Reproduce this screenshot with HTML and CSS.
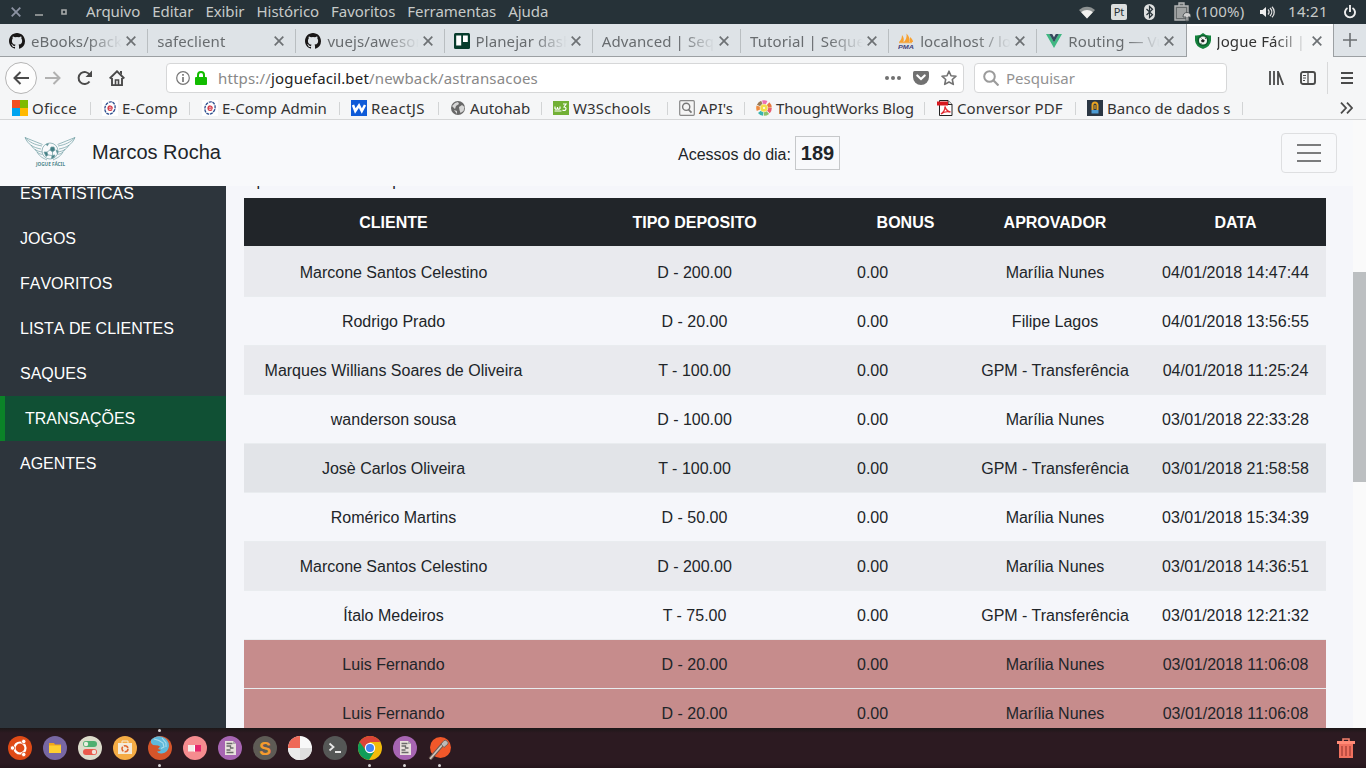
FILE: index.html
```html
<!DOCTYPE html>
<html lang="pt-BR">
<head>
<meta charset="utf-8">
<title>Jogue Fácil</title>
<link rel="stylesheet" href="styles.css">
</head>
<body>
<svg class="defs" width="0" height="0">
  <symbol id="x" viewBox="0 0 10 10"><path d="M.7.7l8.600 8.600M9.300.7L.7 9.300" fill="none" stroke="currentColor" stroke-width="1.700"/></symbol>
  <symbol id="github" viewBox="0 0 16 16"><path fill="#191717" d="M8 0C3.580 0 0 3.580 0 8c0 3.540 2.290 6.530 5.470 7.590.4.070.55-.17.55-.38V13.820c-2.010.37-2.530-.49-2.690-.94-.09-.23-.48-.94-.82-1.130-.28-.15-.68-.52-.01-.53.63-.01 1.080.58 1.230.82.72 1.210 1.870.87 2.330.66.070-.52.28-.87.51-1.070-1.780-.2-3.640-.89-3.640-3.950 0-.87.31-1.590.82-2.150-.08-.2-.36-1.020.080-2.120 0 0 .67-.21 2.200.82a7.600 7.600 0 0 1 4 0c1.530-1.040 2.200-.82 2.200-.82.44 1.100.16 1.920.080 2.120.51.56.82 1.270.82 2.150 0 3.070-1.870 3.750-3.650 3.950.29.25.54.73.54 1.480v2.200c0 .21.15.46.55.38A8 8 0 0 0 16 8c0-4.420-3.580-8-8-8z"/></symbol>
  <symbol id="ecomp" viewBox="0 0 16 16"><rect width="16" height="16" fill="#fff"/><ellipse cx="8" cy="8" rx="5" ry="6.300" fill="none" stroke="#2c4d8e" stroke-width="1.300" stroke-dasharray="3 .8" transform="rotate(18 8 8)"/><path d="M6 8.200h4.200c.2-2.800-4.200-3-4.200 0 0 2.800 3.300 2.500 4 1.200" fill="none" stroke="#d43a48" stroke-width="1.300"/></symbol>
  <symbol id="doc" viewBox="0 0 24 24"><circle cx="12" cy="12" r="12" fill="#a765b2"/><path d="M7 5h8l3 3v11H7z" fill="#e8e2dd"/><path d="M8.500 7.500h6M8.500 10h4v2h3M8.500 14h4M8.500 16.500h7" fill="none" stroke="#6a6a6a" stroke-width="1.300"/><path d="M15 5v3h3" fill="#aaa"/></symbol>
</svg>

<header class="panel">
  <div class="winbtns">
    <svg width="10" height="10"><path d="M.7.7l8.600 8.600M9.300.7L.7 9.300" stroke="#8c93a3" stroke-width="1.800"/></svg>
    <svg width="8" height="10"><path d="M0 8h8" stroke="#a8abaa" stroke-width="1.500"/></svg>
    <svg width="6" height="10"><path d="M1 3h4v4H1z" fill="none" stroke="#a8abaa" stroke-width="1.600"/></svg>
  </div>
  <nav class="menu"><span>Arquivo</span><span>Editar</span><span>Exibir</span><span>Histórico</span><span>Favoritos</span><span>Ferramentas</span><span>Ajuda</span></nav>
  <div class="tray">
    <svg class="wifi" width="16" height="13"><path d="M0 4C4.500-.5 11.500-.5 16 4L8 12.500z" fill="#8d9292"/><path d="M2.200 6.300c3.300-3 8.300-3 11.600 0L8 12.500z" fill="#f2f2f0"/></svg>
    <span class="lang">Pt</span>
    <svg class="bt" width="11" height="16"><rect width="11" height="16" rx="5.500" fill="#dfe1e1"/><path d="M2.500 5l6 5.700L5.500 13.500v-11l3 2.800-6 5.700" fill="none" stroke="#263238" stroke-width="1.200"/></svg>
    <svg class="bat" width="17" height="20"><path d="M5 1h5v3H5zM1 4h13v14H1z" fill="#666b6c" stroke="#b4b6b6" stroke-width="1.400"/><path d="M3 6h9v10H3z" fill="#9fa2a2"/><path d="M9 15c0-3 1.500-4.500 4-4.500s4 1.500 4 4.500h-3v4h-2v-4z" fill="#cfcfcf" stroke="#4b5052" stroke-width=".9"/></svg>
    <span class="pct">(100%)</span>
    <svg class="vol" width="15" height="12"><path d="M0 4h2.500L6 1v10L2.500 8H0z" fill="#eee"/><path d="M8 3.500c1.300 1.500 1.300 3.500 0 5M10 2c2.300 2.300 2.300 5.700 0 8M12 .7c3 3 3 7.600 0 10.600" fill="none" stroke="#ddd" stroke-width="1.300"/></svg>
    <span class="clock">14:21</span>
    <svg class="power" width="12" height="14"><path d="M3.500 3a5 5 0 1 0 5 0M6 0v7" fill="none" stroke="#eee" stroke-width="1.900"/></svg>
  </div>
</header>

<div class="tabs">
  <div class="tab"><svg class="fav"><use href="#github"/></svg><span class="title">eBooks/packt</span><svg class="close"><use href="#x"/></svg></div>
  <div class="tab"><span class="title">safeclient</span><svg class="close"><use href="#x"/></svg></div>
  <div class="tab"><svg class="fav"><use href="#github"/></svg><span class="title">vuejs/awesome</span><svg class="close"><use href="#x"/></svg></div>
  <div class="tab"><svg class="fav" viewBox="0 0 16 16"><rect width="16" height="16" rx="1.500" fill="#073c2c"/><path d="M2.200 2.500h5v10h-5zM9 2.500h4.800v6.500H9z" fill="#fff"/></svg><span class="title">Planejar dashb</span><svg class="close"><use href="#x"/></svg></div>
  <div class="tab"><span class="title">Advanced | Sequelize</span><svg class="close"><use href="#x"/></svg></div>
  <div class="tab"><span class="title">Tutorial | Sequelize</span><svg class="close"><use href="#x"/></svg></div>
  <div class="tab"><svg class="fav" viewBox="0 0 16 16"><path d="M1 9c2-2 3-4 3-7 2 2 2 5 1.500 7zM6 9c2-2 3-5 2.500-8.500 3 3 3.500 6 3 8.500zM12 9V4c2 2 3 3 3 5z" fill="#f7a131"/><path d="M1 9.700h13" stroke="#f7a131"/><text x="0" y="15.500" class="pma" textLength="16" lengthAdjust="spacingAndGlyphs">PMA</text></svg><span class="title">localhost / loc</span><svg class="close"><use href="#x"/></svg></div>
  <div class="tab last"><svg class="fav" viewBox="0 0 16 16"><path d="M0 1h3.300L8 9l4.700-8H16L8 15z" fill="#41b883"/><path d="M3.200 1h3L8 4.200 9.800 1h3L8 9.300z" fill="#35495e"/></svg><span class="title">Routing — Vue</span><svg class="close"><use href="#x"/></svg></div>
  <div class="tab active"><svg class="fav" viewBox="0 0 16 16"><path d="M0 2.500q5 .5 8-2.500 3 3 8 2.500v5q-.5 6-8 8.500-7.500-2.500-8-8.500z" fill="#15823d"/><circle cx="8" cy="7.500" r="5.600" fill="#0c5a2c"/><circle cx="8" cy="7.500" r="4" fill="#f2f4f2"/><path d="M7.700 6l2 1.200-.7 2H6.700L6 7.500z" fill="#222"/><path d="M5.500 4.500l1 .8M10.300 4.500l.7 1.500M5.500 10l.8.8" stroke="#222"/></svg><span class="title">Jogue Fácil | Área</span><svg class="close"><use href="#x"/></svg></div>
  <div class="newtab"><svg width="14" height="14"><path d="M7 0v14M0 7h14" stroke="#6b6f72" stroke-width="1.600"/></svg></div>
</div>

<div class="toolbar">
  <div class="back"><svg width="16" height="14"><path d="M7.500 1L1.500 7l6 6M1.500 7H16" fill="none" stroke="#4a4a4a" stroke-width="2"/></svg></div>
  <svg class="fwd" width="16" height="14"><path d="M8.500 1l6 6-6 6M14.500 7H0" fill="none" stroke="#b1b1b1" stroke-width="2"/></svg>
  <svg class="reload" width="16" height="16"><path d="M12.500 11.500A6 6 0 1 1 12.800 5" fill="none" stroke="#4a4a4a" stroke-width="2"/><path d="M15 .5V7H8.500z" fill="#4a4a4a"/></svg>
  <svg class="home" width="16" height="16"><path d="M.7 8.500L8 1.300l7.300 7.200M3 8v7.200h10V8" fill="none" stroke="#4a4a4a" stroke-width="1.900"/><path d="M6.500 15v-5h3v5" fill="none" stroke="#4a4a4a" stroke-width="1.600"/><path d="M11 1h2v4l-2-2z" fill="#4a4a4a"/></svg>
  <div class="url">
    <svg class="info" width="14" height="14"><circle cx="7" cy="7" r="6.300" fill="none" stroke="#777" stroke-width="1.200"/><path d="M7 6v5M7 3v1.700" stroke="#777" stroke-width="1.700"/></svg>
    <svg class="lock" width="12" height="14"><path d="M3 7V4a3 3 0 0 1 6 0v3" fill="none" stroke="#12bc00" stroke-width="2"/><rect y="6" width="12" height="8" rx="1" fill="#12bc00"/></svg>
    <span class="addr"><span>https://</span><b>joguefacil.bet</b><span>/newback/astransacoes</span></span>
    <svg class="dots" width="16" height="4"><g fill="#717171"><circle cx="2" cy="2" r="2"/><circle cx="8" cy="2" r="2"/><circle cx="14" cy="2" r="2"/></g></svg>
    <svg class="pocket" width="16" height="14"><path d="M1.500 0h13Q16 0 16 1.500V6a8 8 0 0 1-16 0V1.500Q0 0 1.500 0z" fill="#717171"/><path d="M4.300 4.500L8 8l3.700-3.500" fill="none" stroke="#fff" stroke-width="2.200" stroke-linecap="round"/></svg>
    <svg class="star" width="16" height="16"><path d="M8 1.200l2 4.500 5 .5-3.700 3.300 1 4.900L8 12l-4.300 2.400 1-4.900L1 6.200l5-.5z" fill="none" stroke="#717171" stroke-width="1.600" stroke-linejoin="round"/></svg>
  </div>
  <div class="search"><svg width="16" height="16"><circle cx="6.500" cy="6.500" r="5.300" fill="none" stroke="#9b9b9b" stroke-width="2"/><path d="M10.300 10.300L15.500 15.500" stroke="#9b9b9b" stroke-width="2.200"/></svg><span>Pesquisar</span></div>
  <svg class="lib" width="15" height="14"><path d="M1 0v14M5 0v14M9 0v14M9.500 1.500L14.200 14" stroke="#4a4a4a" stroke-width="1.800" fill="none"/></svg>
  <svg class="side" width="16" height="14"><rect x="1" y="1" width="14" height="12" rx="2" fill="none" stroke="#4a4a4a" stroke-width="1.900"/><path d="M8 1v12" stroke="#4a4a4a" stroke-width="1.300"/><path d="M3 4.500h3M3 7h3M3 9.500h2" stroke="#4a4a4a"/></svg>
  <div class="burger"><svg width="12" height="12"><path d="M0 1h12M0 6h12M0 11h12" stroke="#4a4a4a" stroke-width="2"/></svg></div>
</div>

<div class="bookmarks">
  <div class="bm w1"><svg viewBox="0 0 16 16"><path d="M0 0h8v8H0z" fill="#f25022"/><path d="M8 0h8v8H8z" fill="#7fba00"/><path d="M0 8h8v8H0z" fill="#00a4ef"/><path d="M8 8h8v8H8z" fill="#ffb900"/></svg><span>Oficce</span></div>
  <div class="bm w2"><svg><use href="#ecomp"/></svg><span>E-Comp</span></div>
  <div class="bm w3"><svg><use href="#ecomp"/></svg><span>E-Comp Admin</span></div>
  <div class="bm w4"><svg viewBox="0 0 16 16"><rect width="16" height="16" fill="#0f5bd8"/><path d="M2 5l2.300 6L8 5.500l2.800 5.500L14 5" fill="none" stroke="#fff" stroke-width="2.500"/></svg><span>ReactJS</span></div>
  <div class="bm w5"><svg viewBox="0 0 16 16"><circle cx="8" cy="8" r="7" fill="#686868"/><path d="M2 6l3-3 3-1 1 2-3 2-1 3zM9 7l3-2 2.500 2-1 4-3 2-1-3zM4 10l3 1v3z" fill="#d7d7d7"/></svg><span>Autohab</span></div>
  <div class="bm w6"><svg viewBox="0 0 16 16"><rect y="1" width="16" height="14" fill="#72b035"/><path d="M2 6.500v2q1.500 1.500 2.500 0V7v1.500q1.500 1.500 2.500 0v-2M1.500 11h7M10 4h3l-2 3q3 .5 1.500 3-1.500 1-3 0" fill="none" stroke="#fff" stroke-width="1.200"/></svg><span>W3Schools</span></div>
  <div class="bm w7"><svg viewBox="0 0 16 16"><rect x=".7" y=".7" width="14.600" height="14.600" rx="1" fill="#f5f5f5" stroke="#888" stroke-width="1.200"/><circle cx="7.200" cy="6.800" r="3.600" fill="none" stroke="#777" stroke-width="1.400"/><path d="M9.500 9.500l3 3.200" stroke="#777" stroke-width="1.800"/></svg><span>API's</span></div>
  <div class="bm w8"><svg viewBox="0 0 16 16"><g fill="none" stroke-width="3.600"><circle cx="8" cy="8" r="6" stroke="#e95c6c" stroke-dasharray="4.300 34"/><circle cx="8" cy="8" r="6" stroke="#8bc269" stroke-dasharray="4.300 34" stroke-dashoffset="-5"/><circle cx="8" cy="8" r="6" stroke="#3bb5b0" stroke-dasharray="4.300 34" stroke-dashoffset="-10"/><circle cx="8" cy="8" r="6" stroke="#f08b3e" stroke-dasharray="4.300 34" stroke-dashoffset="-16"/><circle cx="8" cy="8" r="6" stroke="#9a7b58" stroke-dasharray="4.300 34" stroke-dashoffset="-21"/><circle cx="8" cy="8" r="6" stroke="#ee6fb0" stroke-dasharray="4.300 34" stroke-dashoffset="-26"/><circle cx="8" cy="8" r="6" stroke="#e9793e" stroke-dasharray="4.300 34" stroke-dashoffset="-32"/></g><circle cx="8" cy="8" r="3.700" fill="#f5dc4a"/><circle cx="8" cy="8" r="1" fill="#fff"/></svg><span>ThoughtWorks Blog</span></div>
  <div class="bm w9"><svg viewBox="0 0 16 16"><path d="M2.500.5h8.500l4 4v11H2.500z" fill="#fff" stroke="#222"/><path d="M11 .5v4h4" fill="#ddd" stroke="#222"/><path d="M0 1.500h11v4H0z" fill="#d71920"/><path d="M4 14c3-2 4-5 4-7.500 1 4 3 5 5.500 5.500-4-1-7 0-9.500 2z" fill="none" stroke="#e32b32" stroke-width="1.300"/></svg><span>Conversor PDF</span></div>
  <div class="bm w10"><svg viewBox="0 0 16 16"><rect width="16" height="16" fill="#2b3744"/><path d="M5.500 10V5a2.500 2.500 0 0 1 5 0v5" fill="none" stroke="#e9a421" stroke-width="2"/><path d="M8 5v4" stroke="#e9a421" stroke-width="1.200"/><path d="M4.500 10h7v3.500h-7z" fill="#4c9bd3"/></svg><span>Banco de dados s</span></div>
  <svg class="more" width="13" height="12"><path d="M1 .7L6 6l-5 5.300M7 .7L12 6l-5 5.300" fill="none" stroke="#4a4a4a" stroke-width="1.800"/></svg>
</div>

<div class="page">
  <div class="view">
    <header class="topbar">
      <svg class="logo" width="52" height="32" viewBox="0 0 52 32" fill="none" stroke="#6f9ea2" stroke-width=".7">
        <path d="M1 1.500l17.500 7M1 1.500c3 7 8 10 16 11.500M1 1.500c5 5 9 7 17 8.500M7 9c3 5 6 6 11 7M11 13c2 4 5 5 7.500 5.500M13 16c3 5 6 6 10 8"/>
        <path d="M51 1.500l-17.500 7M51 1.500c-3 7-8 10-16 11.500M51 1.500c-5 5-9 7-17 8.500M45 9c-3 5-6 6-11 7M41 13c-2 4-5 5-7.500 5.500M39 16c-3 5-6 6-10 8"/>
        <circle cx="26" cy="15" r="8" fill="#f8f9fb"/>
        <path d="M27 11l3 0 1 3-2.500 2-2.500-2zM20 16l3 0 1 3-2 1.500zM28 19.500l3-.5-1 2.500-2.500 1zM22 8.500l2.500-.8-1 2zM32 14l2 1-.5 3z" fill="#437e84"/><path d="M26 14l-3 2M24 19l4 .5M28.500 16v3.500" />
        <text x="12" y="30.300" textLength="29" lengthAdjust="spacingAndGlyphs">JOGUE FÁCIL</text>
      </svg>
      <span class="user">Marcos Rocha</span>
      <div class="visits"><span>Acessos do dia:</span><b>189</b></div>
      <div class="toggler"><svg width="24" height="20"><path d="M0 2h24M0 10h24M0 18h24" stroke="#7b7c7d" stroke-width="2"/></svg></div>
    </header>
    <div class="body">
      <aside class="sidebar">
        <a>ESTATISTICAS</a><a>JOGOS</a><a>FAVORITOS</a><a>LISTA DE CLIENTES</a><a>SAQUES</a><a class="on">TRANSAÇÕES</a><a>AGENTES</a>
      </aside>
      <main class="content">
        <div class="filter"><span>Op</span><span>p</span></div>
        <table>
          <colgroup><col class="c1"><col class="c2"><col class="c3"><col class="c4"><col class="c5"></colgroup>
          <thead><tr><th>CLIENTE</th><th>TIPO DEPOSITO</th><th>BONUS</th><th>APROVADOR</th><th>DATA</th></tr></thead>
          <tbody>
            <tr class="odd"><td>Marcone Santos Celestino</td><td>D - 200.00</td><td>0.00</td><td>Marília Nunes</td><td>04/01/2018 14:47:44</td></tr>
            <tr><td>Rodrigo Prado</td><td>D - 20.00</td><td>0.00</td><td>Filipe Lagos</td><td>04/01/2018 13:56:55</td></tr>
            <tr class="odd"><td>Marques Willians Soares de Oliveira</td><td>T - 100.00</td><td>0.00</td><td>GPM - Transferência</td><td>04/01/2018 11:25:24</td></tr>
            <tr><td>wanderson sousa</td><td>D - 100.00</td><td>0.00</td><td>Marília Nunes</td><td>03/01/2018 22:33:28</td></tr>
            <tr class="hover"><td>Josè Carlos Oliveira</td><td>T - 100.00</td><td>0.00</td><td>GPM - Transferência</td><td>03/01/2018 21:58:58</td></tr>
            <tr><td>Romérico Martins</td><td>D - 50.00</td><td>0.00</td><td>Marília Nunes</td><td>03/01/2018 15:34:39</td></tr>
            <tr class="odd"><td>Marcone Santos Celestino</td><td>D - 200.00</td><td>0.00</td><td>Marília Nunes</td><td>03/01/2018 14:36:51</td></tr>
            <tr><td>Ítalo Medeiros</td><td>T - 75.00</td><td>0.00</td><td>GPM - Transferência</td><td>03/01/2018 12:21:32</td></tr>
            <tr class="red"><td>Luis Fernando</td><td>D - 20.00</td><td>0.00</td><td>Marília Nunes</td><td>03/01/2018 11:06:08</td></tr>
            <tr class="red"><td>Luis Fernando</td><td>D - 20.00</td><td>0.00</td><td>Marília Nunes</td><td>03/01/2018 11:06:08</td></tr>
          </tbody>
        </table>
      </main>
    </div>
  </div>
  <div class="scroll"><div class="thumb"></div></div>
</div>

<footer class="dock">
  <div class="app"><svg viewBox="0 0 24 24"><circle cx="12" cy="12" r="12" fill="#df4a16"/><circle cx="12" cy="12" r="5.500" fill="none" stroke="#fff" stroke-width="2.200"/><g fill="#fff" stroke="#df4a16" stroke-width=".8"><circle cx="4.500" cy="12" r="2.200"/><circle cx="15.700" cy="5.500" r="2.200"/><circle cx="15.700" cy="18.500" r="2.200"/></g></svg></div>
  <div class="app"><svg viewBox="0 0 24 24"><circle cx="12" cy="12" r="12" fill="#7767a3"/><path d="M6 7h5l1 1.500h6V17H6z" fill="#f0a51b"/><path d="M6 9.500h12V17H6z" fill="#ffce31"/></svg></div>
  <div class="app"><svg viewBox="0 0 24 24"><circle cx="12" cy="12" r="12" fill="#dddccb"/><rect x="5" y="5" width="14" height="6" rx="3" fill="#4faf70"/><circle cx="8" cy="8" r="2.200" fill="#e9eee0"/><rect x="5" y="13" width="14" height="6" rx="3" fill="#ea5a4c"/><circle cx="16" cy="16" r="2.200" fill="#f1e3da"/></svg></div>
  <div class="app"><svg viewBox="0 0 24 24"><circle cx="12" cy="12" r="12" fill="#f5ac45"/><path d="M5 7h14v11H5z" fill="#f3ead9"/><path d="M9 7V5h6v2" fill="none" stroke="#f3ead9"/><circle cx="12" cy="12.700" r="3" fill="none" stroke="#e1652d" stroke-width="1.600" stroke-dasharray="5 1.280"/></svg></div>
  <div class="app run top"><svg viewBox="0 0 24 24"><circle cx="12" cy="12" r="12" fill="#d4552a"/><path d="M3 4Q8-1 14 .7 21 3 21 10q-1 7-7 7.500-4 .5-5-2 3 0 4-1.500l-3-1 2-2.500-2-1L5 9 3 7z" fill="#5eb9dc"/><path d="M6 3l5 1.500L15 7l1 4-3 1.500M14 2l4 5v4" fill="none" stroke="#a9dced" stroke-width="1.100"/></svg></div>
  <div class="app"><svg viewBox="0 0 24 24"><circle cx="12" cy="12" r="12" fill="#f58c8f"/><path d="M5 9h7v6.500H5z" fill="#f3eee9"/><path d="M12 9h6v6.500h-6z" fill="#e5276d"/><path d="M11 9h1v6.500h-1z" fill="#fff"/></svg></div>
  <div class="app"><svg><use href="#doc"/></svg></div>
  <div class="app"><svg viewBox="0 0 24 24"><circle cx="12" cy="12" r="12" fill="#5e5b55"/><text class="subl" x="12" y="18.500" text-anchor="middle">S</text></svg></div>
  <div class="app"><svg viewBox="0 0 24 24"><circle cx="12" cy="12" r="12" fill="#f8f8f8"/><path d="M12 12V0A12 12 0 0 0 0 12z" fill="#ef6957"/><path d="M0 12a12 12 0 0 0 24 0z" fill="#dedede"/><path d="M12 12v12A12 12 0 0 1 0 12z" fill="#ebebeb"/></svg></div>
  <div class="app"><svg viewBox="0 0 24 24"><circle cx="12" cy="12" r="12" fill="#555756"/><path d="M6.500 7.500l4 3.500-4 3.500M12 16h6" fill="none" stroke="#e8e8e8" stroke-width="1.800"/></svg></div>
  <div class="app run"><svg viewBox="0 0 24 24"><circle cx="12" cy="12" r="12" fill="#f2bb0a"/><path d="M12 6h10.400A12 12 0 0 0 1.600 6L7 14.500z" fill="#db4437"/><path d="M1.600 6A12 12 0 0 0 11 24l5-8-8-1.500z" fill="#0f9d58"/><circle cx="12" cy="12" r="5.200" fill="#fff"/><circle cx="12" cy="12" r="4" fill="#4285f4"/></svg></div>
  <div class="app run"><svg><use href="#doc"/></svg></div>
  <div class="app run"><svg viewBox="0 0 24 24"><circle cx="12.500" cy="11.500" r="10.500" fill="#f1582a"/><path d="M2 23L15 8" stroke="#6b5a52" stroke-width="3.600"/><path d="M2 23L15 8" stroke="#cfc5bd" stroke-width="1.700"/><path d="M13 8l3-3.500a3 3 0 0 1 4 3.500l-4 3.500z" fill="#bdbab8" stroke="#66584f" stroke-width=".8"/></svg></div>
  <svg class="trash" width="18" height="20" viewBox="0 0 18 20"><path d="M6 3V1h6v2" fill="none" stroke="#f4806c" stroke-width="1.600"/><path d="M0 3h18v3H0z" fill="#ff8a76"/><path d="M2 6h14v14H2z" fill="#f0715f"/><path d="M5 8v10M9 8v10M13 8v10" stroke="#b74b40" stroke-width="1.700"/></svg>
</footer>
</body>
</html>
```

FILE: styles.css
```css
* { box-sizing: border-box; }
body { margin: 0; width: 1366px; height: 768px; overflow: hidden; display: flex; flex-direction: column; font: 15px/20px "Noto Sans", sans-serif; color: #333; background: #f5f6fa; }
svg { display: block; flex: none; }
.defs { position: absolute; }

.panel { height: 24px; flex: none; display: flex; align-items: center; background: #263238; color: #c6cac9; }
.winbtns { width: 86px; padding-left: 11px; display: flex; gap: 15px; align-items: center; }
.winbtns svg:first-child { margin-right: -1px; }
.winbtns svg:last-child { margin-left: 3px; }
.menu { display: flex; gap: 12px; line-height: 22px; height: 24px; letter-spacing: -.05px; }
.tray { margin-left: auto; display: flex; align-items: center; padding-right: 10px; }
.lang { margin-left: 16px; width: 16px; height: 16px; border-radius: 2px; background: #dcdfdf; color: #263238; font-size: 11px; line-height: 16px; text-align: center; }
.bt { margin-left: 17px; }
.bat { margin-left: 19px; }
.pct { width: 50px; margin-left: 5px; letter-spacing: .2px; padding-bottom: 2px; }
.vol { margin-left: 14px; }
.clock { width: 40px; margin-left: 13px; letter-spacing: .3px; padding-bottom: 2px; }
.power { margin-left: 16px; }

.tabs { height: 33px; flex: none; display: flex; background: #dee3e7; border-bottom: 1px solid #9ca0a3; }
.tab { width: 148.200px; height: 32px; flex: none; display: flex; align-items: center; padding: 2px 12px 0 9px; position: relative; color: #686c6f; }
.tab::after { content: ""; position: absolute; right: 0; top: 5px; width: 1px; height: 24px; background: #b9bec1; }
.tab.last::after { display: none; }
.fav { width: 16px; height: 16px; margin-right: 6px; }
.title { flex: 1; overflow: hidden; white-space: nowrap; margin-right: 4px; letter-spacing: .1px; -webkit-mask-image: linear-gradient(90deg, #000 calc(100% - 34px), transparent); mask-image: linear-gradient(90deg, #000 calc(100% - 34px), transparent); }
.close { width: 10px; height: 10px; color: #6d7174; }
.tab.active { height: 33px; background: #f5f6f7; border: solid #9ca0a3; border-width: 0 1px; color: #333; box-shadow: inset 0 2px #fff; padding: 1px 11px 0 8px; }
.tab.active::after { display: none; }
.newtab { flex: 1; display: flex; align-items: center; justify-content: center; }
.pma { font: italic bold 6px "Liberation Sans", sans-serif; fill: #44447c; }

.toolbar { height: 42px; flex: none; display: flex; align-items: center; background: #f5f6f7; padding-left: 5px; }
.back { width: 32px; height: 32px; border: 1px solid #b5b5b5; border-radius: 50%; background: #fdfdfd; display: flex; align-items: center; justify-content: center; }
.fwd { margin-left: 8px; }
.reload { margin-left: 16px; }
.home { margin-left: 16px; }
.url, .search { height: 30px; background: #fff; border: 1px solid #d6d7d8; border-radius: 4px; display: flex; align-items: center; }
.url { width: 798px; margin-left: 41px; padding: 0 6px 0 9px; }
.lock { margin-left: 5px; margin-top: 0; }
.addr { margin-left: 11px; color: #888; flex: 1; letter-spacing: .17px; }
.addr b { color: #222; font-weight: 400; }
.pocket { margin-left: 12px; }
.star { margin-left: 12px; }
.search { width: 253px; margin-left: 10px; padding-left: 8px; color: #929292; }
.search span { margin-left: 7px; }
.lib { margin-left: 42px; }
.side { margin-left: 16px; }
.burger { margin-left: 11px; border-left: 1px solid #d8d9da; height: 32px; display: flex; align-items: center; padding-left: 13px; }

.bookmarks { height: 21px; flex: none; display: flex; align-items: center; background: #f5f6f7; border-bottom: 1px solid #d5d6d7; padding-bottom: 2px; }
.bm { display: flex; align-items: center; height: 18px; padding-left: 11px; white-space: nowrap; background: linear-gradient(#d2d4d5, #d2d4d5) right center / 1px 13px no-repeat; }
.bm svg { width: 16px; height: 16px; margin-right: 4px; }
.w1 { width: 91px; padding-left: 12px; letter-spacing: .2px; }
.w2 { width: 99px; letter-spacing: .15px; }
.w3 { width: 150px; padding-left: 12px; }
.w4 { width: 99px; letter-spacing: .4px; }
.w5 { width: 103px; }
.w6 { width: 126px; letter-spacing: .15px; }
.w7 { width: 77px; }
.w8 { width: 180px; letter-spacing: -.12px; }
.w9 { width: 151px; padding-left: 12px; letter-spacing: .1px; }
.w10 { width: 167px; }
.more { margin-left: auto; margin-right: 13px; }

.page { height: 608px; flex: none; display: flex; font: 16px/24px "Liberation Sans", sans-serif; color: #212529; }
.view { width: 1353px; display: flex; flex-direction: column; }
.topbar { height: 66px; flex: none; display: flex; align-items: center; background: #f8f9fb; padding: 0 16px 0 24px; }
.logo text { font: bold 4.600px "Noto Sans", sans-serif; fill: #4e868b; stroke: none; }
.logo { margin-top: -3px; }
.user { margin-left: 16px; font-size: 20px; margin-top: -2px; width: 586px; }
.visits { display: flex; align-items: center; gap: 4px; }
.visits span { padding-top: 3px; }
.visits b { height: 34px; width: 45px; border: 1px solid #c6c8ca; font-size: 20px; line-height: 32px; text-align: center; }
.toggler { margin-left: auto; width: 56px; height: 40px; border: 1px solid #dedfe1; border-radius: 4px; display: flex; align-items: center; justify-content: center; }
.body { height: 542px; display: flex; overflow: hidden; }
.sidebar { width: 226px; background: #2d353c; flex: none; display: flex; flex-direction: column; overflow: hidden; font-kerning: none; }
.sidebar a { height: 45px; flex: none; line-height: 45px; padding-left: 20px; color: #fff; }
.sidebar a:first-child { margin-top: -15px; }
.sidebar .on { background: #105034; border-left: 5px solid #0b8328; }
.content { padding-left: 18px; background: #f5f6fa; flex: 1; }
.filter { height: 12px; display: flex; line-height: 0; }
.filter span { margin-top: -5px; }
.filter span + span { margin-left: 127px; }
table { width: 1082px; table-layout: fixed; border-collapse: separate; border-spacing: 0; text-align: center; }
.c1 { width: 299px; } .c2 { width: 303px; } .c3 { width: 119px; } .c4 { width: 180px; } .c5 { width: 181px; }
th { height: 48px; padding: 2px 0 0; background: #212529; color: #fff; }
td { height: 49px; padding: 2px 0 0; border-top: 1px solid #e9ecef; white-space: nowrap; }
tbody tr:first-child td { height: 50px; border-top-width: 2px; border-color: #e8eaed; }
td:nth-child(3) { text-align: left; padding-left: 11px; }
.odd td { background: #e9eaee; }
.hover td { background: #e2e4e8; }
.red td { background: #c68c8c; }
.scroll { width: 13px; background: #fafafa; padding-top: 152px; }
.thumb { height: 210px; background: #bcbfc1; }

.dock { height: 40px; flex: none; display: flex; align-items: center; background: linear-gradient(#1c1718, #2c1a21 5px, #2c1a21 35px, #24151b); padding: 0 11px 0 8px; }
.app { width: 24px; height: 40px; margin-right: 11px; display: flex; align-items: center; position: relative; }
.app svg { width: 24px; height: 24px; }
.run::after, .top::before { content: ""; position: absolute; left: 10px; width: 3px; height: 3px; border-radius: 50%; background: #d8d4d5; }
.run::after { bottom: 1px; }
.top::before { top: 1px; }
.subl { font: bold 18px "Liberation Sans", sans-serif; fill: #f59b2d; }
.trash { margin-left: auto; }
```
